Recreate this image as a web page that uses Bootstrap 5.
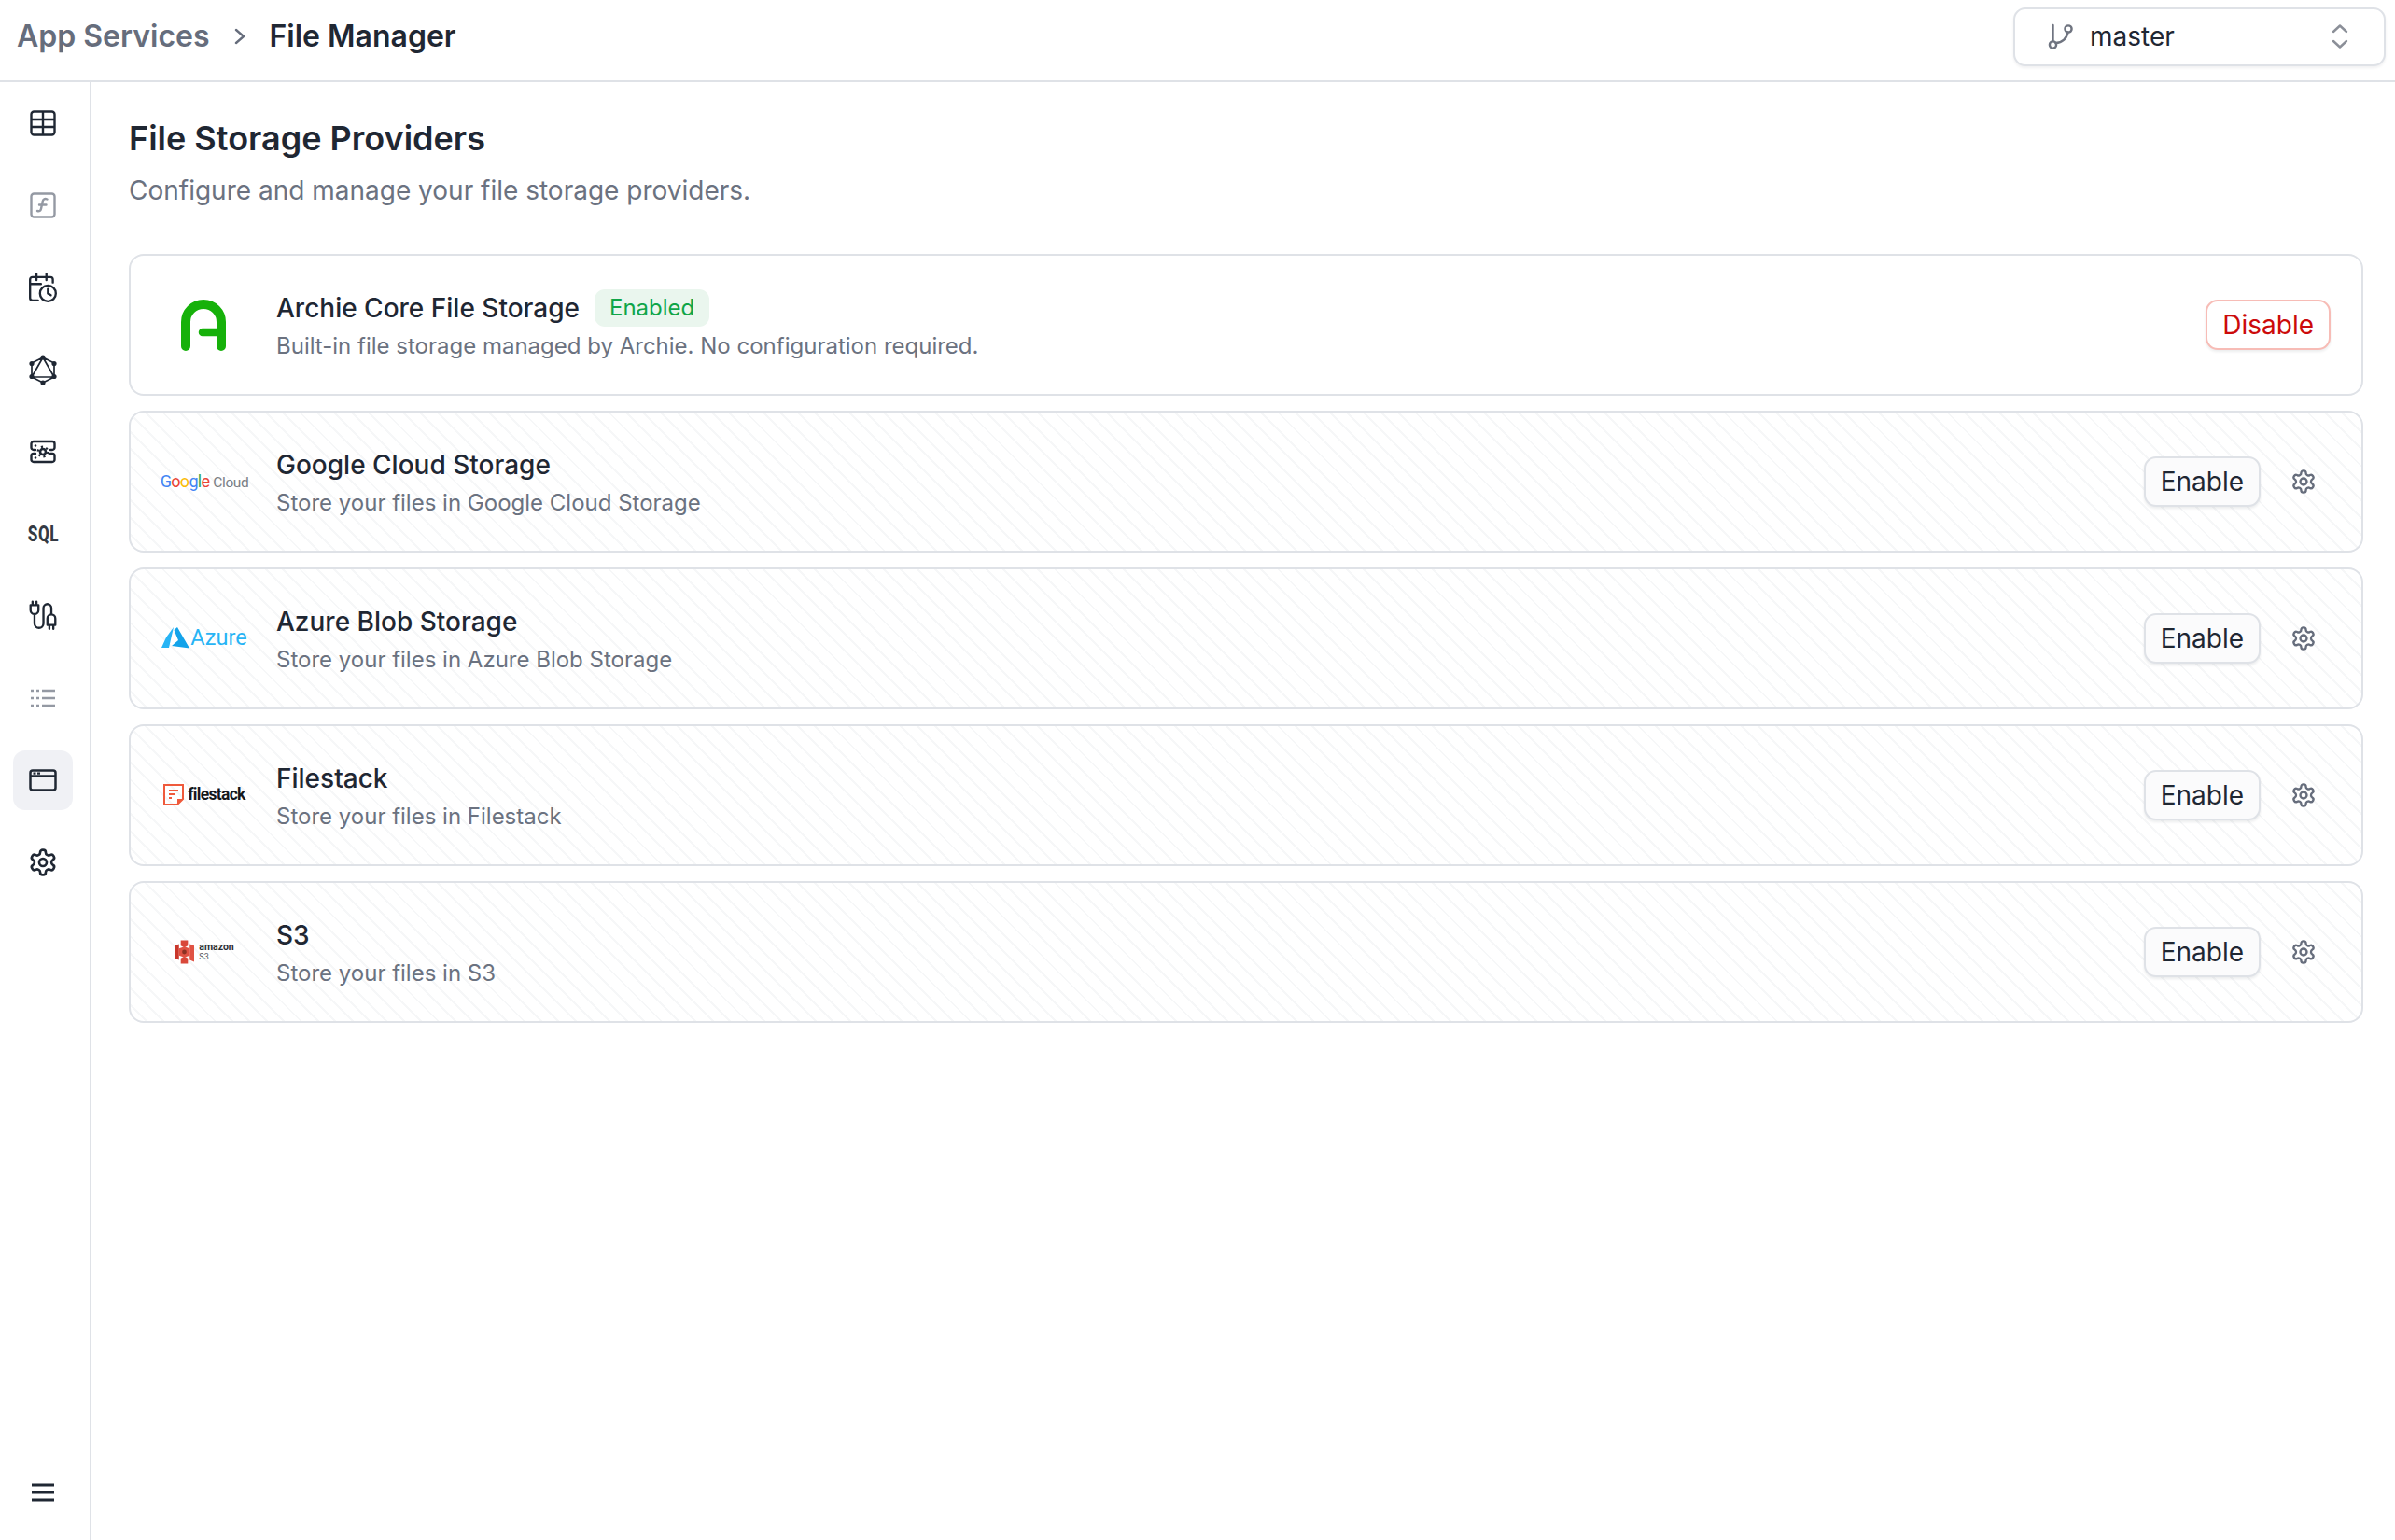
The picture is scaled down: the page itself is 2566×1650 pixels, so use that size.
<!DOCTYPE html>
<html lang="en">
<head>
<meta charset="utf-8">
<title>File Manager</title>
<link rel="stylesheet" href="https://cdn.jsdelivr.net/npm/bootstrap@5.3.0/dist/css/bootstrap.min.css">
<style>
html,body{height:100%;}
body{font-family:"Inter","Liberation Sans",sans-serif;color:#1f2733;background:#fff;font-size:28px;overflow:hidden;}
.topbar{height:88px;border-bottom:2px solid #dfe2e7;padding:0 10px 8px 18px;}
.crumb{font-size:32px;font-weight:600;line-height:1;}
.crumb-muted{color:#666d7c;}
.crumb-sep{margin:0 25px 0 25px;}
.branch{width:399px;height:63px;border:2px solid #dfe2e7;border-radius:13px;padding:0 36px 0 34px;box-shadow:0 2px 3px rgba(16,24,40,.06);background:#fff;color:#1f2733;font-size:28px;line-height:1;}
.branch .name{margin-left:16px;}
.shell{height:calc(100% - 88px);}
.side{width:98px;border-right:2px solid #dfe2e7;padding:12px 0 19px 14px;flex:none;}
.side-btn{width:64px;height:64px;border-radius:13px;color:#1f2733;text-decoration:none;}
.side-btn.dim{color:#9499a3;}
.side-btn.active{background:#f0f1f5;}
.side-btn svg{width:30px;height:30px;}
.side-btn svg.tall{width:32px;height:34px;}
.side-btn svg.gear-lg{width:32px;height:32px;}
.side-nav{gap:24px;}
.sql{font-family:"Roboto","Liberation Sans",sans-serif;font-weight:800;font-size:23px;line-height:1;transform:scaleX(.74);letter-spacing:.8px;color:#333a44;}
.main{padding:38px 34px 0 40px;}
h1.page{font-size:36px;font-weight:600;line-height:1.2;margin:0 0 18px;color:#1f2733;padding-top:1px;}
.lead-sub{font-size:28px;color:#6b7280;line-height:1.2;margin:0 0 50px;}
.prov-list{gap:16px;}
.prov{height:152px;border:2px solid #dfe2e7;border-radius:16px;padding:0 33px;background:#fff;}
.prov.off{padding-right:34px;background:repeating-linear-gradient(45deg,#fff 0,#fff 11px,#f6f7f8 11px,#f6f7f8 13px);}
.logo-box{width:92px;flex:none;margin-right:31px;}
.prov-text{padding-top:4px;}
.prov-title{font-size:28px;font-weight:500;line-height:42px;color:#1f2733;}
.prov-sub{font-size:24px;color:#6b7280;line-height:39px;}
.pill{font-size:24px;font-weight:400;line-height:1;color:#10a548;background:#eaf6ee;border-radius:11px;padding:8px 16px;margin-left:16px;}
.act{height:54px;border-radius:13px;border-width:2px;font-size:28px;line-height:1;padding:0 16px;box-shadow:0 2px 3px rgba(16,24,40,.08);}
.act-en{background:#fbfbfc;border-color:#dfe2e7;color:#1f2733;}
.act-dis{background:#fff;border-color:#f7bcb6;color:#cc0a0a;}
.gear{color:#666d7c;width:28px;height:28px;margin:0 14px 0 32px;flex:none;}
.gear svg{width:28px;height:28px;display:block;}
.gc{font-family:"Roboto","Liberation Sans",sans-serif;font-size:18px;letter-spacing:-.7px;white-space:nowrap;line-height:1;}
.gc .bl{color:#4285f4}.gc .re{color:#ea4335}.gc .ye{color:#fbbc05}.gc .gr{color:#34a853}.gc .cl{color:#7b8086;margin-left:4px;font-size:15.5px;letter-spacing:-.4px;}
.az{font-family:"Roboto","Liberation Sans",sans-serif;color:#27b4f5;font-size:23.5px;line-height:1;margin-left:1px;}
.fs{font-family:"Roboto","Liberation Sans",sans-serif;font-weight:700;color:#15181c;font-size:17.5px;letter-spacing:-.7px;line-height:1;margin-left:4px;}
.s3t{font-family:"Roboto","Liberation Sans",sans-serif;line-height:1;color:#2a2f36;margin-left:5px;}
.s3t b{display:block;font-size:10.5px;font-weight:700;}
.s3t span{display:block;font-size:9px;color:#555b64;}
.logo-archie{display:block;margin:2px 2px 0 0;}
</style>
</head>
<body>
<svg width="0" height="0" class="position-absolute"><defs><g id="gear" fill="none" stroke="currentColor" stroke-width="2" stroke-linecap="round" stroke-linejoin="round"><path d="M12.220 2h-.44a2 2 0 0 0-2 2v.18a2 2 0 0 1-1 1.730l-.43.25a2 2 0 0 1-2 0l-.15-.08a2 2 0 0 0-2.730.73l-.22.38a2 2 0 0 0 .73 2.730l.15.1a2 2 0 0 1 1 1.720v.51a2 2 0 0 1-1 1.740l-.15.09a2 2 0 0 0-.73 2.730l.22.38a2 2 0 0 0 2.730.73l.15-.08a2 2 0 0 1 2 0l.43.25a2 2 0 0 1 1 1.730V20a2 2 0 0 0 2 2h.44a2 2 0 0 0 2-2v-.18a2 2 0 0 1 1-1.730l.43-.25a2 2 0 0 1 2 0l.15.08a2 2 0 0 0 2.730-.73l.22-.39a2 2 0 0 0-.73-2.730l-.15-.08a2 2 0 0 1-1-1.740v-.5a2 2 0 0 1 1-1.740l.15-.09a2 2 0 0 0 .73-2.730l-.22-.38a2 2 0 0 0-2.730-.73l-.15.08a2 2 0 0 1-2 0l-.43-.25a2 2 0 0 1-1-1.730V4a2 2 0 0 0-2-2z"/><circle cx="12" cy="12" r="3"/></g></defs></svg>
<header class="topbar d-flex align-items-center justify-content-between">
  <div class="crumb d-flex align-items-center">
    <span class="crumb-muted">App Services</span>
    <svg class="crumb-sep" width="14" height="20" viewBox="0 0 14 20" fill="none" stroke="#666d7c" stroke-width="2.4" stroke-linecap="round" stroke-linejoin="round"><path d="M3 3l8 7-8 7"/></svg>
    <span>File Manager</span>
  </div>
  <button type="button" class="btn branch d-flex align-items-center">
    <svg width="30" height="30" viewBox="0 0 30 30" fill="none" stroke="#6f7480" stroke-width="2.4" stroke-linecap="round"><circle cx="6.500" cy="24" r="3.600"/><circle cx="23" cy="7" r="3.600"/><path d="M6.500 20V3M9.500 22c7 0 12-5 13-11.500"/></svg>
    <span class="name">master</span>
    <svg class="ms-auto" width="22" height="30" viewBox="0 0 22 30" fill="none" stroke="#8b8f98" stroke-width="2.4" stroke-linecap="round" stroke-linejoin="round"><path d="M4 10l7-6.500 7 6.500M4 20l7 6.500 7-6.500"/></svg>
  </button>
</header>
<div class="shell d-flex">
  <aside class="side d-flex flex-column justify-content-between">
    <nav class="side-nav d-flex flex-column">
      <a class="side-btn d-flex align-items-center justify-content-center"><svg viewBox="0 0 30 30" fill="none" stroke="currentColor" stroke-width="2.400"><rect x="2.500" y="2.500" width="25" height="25" rx="3"/><path d="M2.500 11h25M2.500 19h25M15 2.500v25"/></svg></a>
      <a class="side-btn dim d-flex align-items-center justify-content-center"><svg viewBox="0 0 30 30" fill="none" stroke="currentColor" stroke-width="2.400" stroke-linecap="round"><rect x="2.500" y="2.500" width="25" height="25" rx="3"/><path d="M19.500 8.500c-2.500-1-4.300-.3-4.800 2.200l-1.700 8c-.5 2.300-2 3-4 2.300M11 14.500h7.500"/></svg></a>
      <a class="side-btn d-flex align-items-center justify-content-center"><svg class="tall" viewBox="0 0 30 32" fill="none" stroke="currentColor" stroke-width="2.200" stroke-linecap="round" stroke-linejoin="round"><path d="M10 29H4.500A2.500 2.500 0 0 1 2 26.500V8A2.500 2.500 0 0 1 4.500 5.500h18A2.500 2.500 0 0 1 25 8v3M2 12.500h11M8.500 2v6.500M18.500 2v6.500"/><circle cx="20" cy="22" r="8"/><path d="M20 17.500V22l3 1.800"/></svg></a>
      <a class="side-btn d-flex align-items-center justify-content-center"><svg class="tall" viewBox="0 0 30 34" fill="none" stroke="currentColor" stroke-width="1.700" stroke-linejoin="round"><path d="M15 4L27 25H3zM15 4L3 10v15l12 6 12-6V10z"/><g fill="currentColor" stroke="none"><circle cx="15" cy="4" r="2.600"/><circle cx="27" cy="10.500" r="2.600"/><circle cx="3" cy="10.500" r="2.600"/><circle cx="27" cy="24.500" r="2.600"/><circle cx="3" cy="24.500" r="2.600"/><circle cx="15" cy="31" r="2.600"/></g></svg></a>
      <a class="side-btn d-flex align-items-center justify-content-center"><svg viewBox="0 0 30 30" fill="none" stroke="currentColor" stroke-width="2.400" stroke-linecap="round" stroke-linejoin="round"><path d="M7 13H5a2.500 2.500 0 0 1-2.500-2.500V6.500A2.500 2.500 0 0 1 5 4h20a2.500 2.500 0 0 1 2.500 2.500v4A2.500 2.500 0 0 1 25 13h-2M7 17H5a2.500 2.500 0 0 0-2.500 2.500v4A2.500 2.500 0 0 0 5 26h20a2.500 2.500 0 0 0 2.500-2.500v-4A2.500 2.500 0 0 0 25 17h-2"/><circle cx="15" cy="15" r="3" stroke-width="2.600"/><circle cx="15" cy="15" r="5.300" stroke-width="2.200" stroke-dasharray="2.200 3.350" stroke-linecap="butt"/><g fill="currentColor" stroke="none"><circle cx="7" cy="8.500" r="1.300"/><circle cx="7" cy="21.500" r="1.300"/></g></svg></a>
      <a class="side-btn d-flex align-items-center justify-content-center"><span class="sql">SQL</span></a>
      <a class="side-btn d-flex align-items-center justify-content-center"><svg class="tall" viewBox="0 0 30 32" fill="none" stroke="currentColor" stroke-width="2.200" stroke-linecap="round" stroke-linejoin="round"><path d="M2.500 5h8v5a4 4 0 0 1-8 0zM4.500 1.500V5M8.500 1.500V5M6.500 14v9.500a4.500 4.500 0 0 0 9 0V8a4 4 0 0 1 8 0v6"/><path d="M19.500 25v-6.500a4 4 0 0 1 8 0V25zM21.500 25v4M25.500 25v4"/></svg></a>
      <a class="side-btn dim d-flex align-items-center justify-content-center"><svg viewBox="0 0 30 30" fill="none" stroke="currentColor" stroke-width="2.400"><path d="M2 7h3M8 7h3M14 7h14M2 15h3M8 15h3M14 15h14M2 23h3M8 23h3M14 23h14"/></svg></a>
      <a class="side-btn active d-flex align-items-center justify-content-center"><svg viewBox="0 0 30 30" fill="none" stroke="currentColor" stroke-width="2.500"><rect x="1.500" y="4.500" width="27" height="21" rx="2.500"/><path d="M1.500 10.500h27"/><path d="M4.500 7.700h3M9 7.700h3" stroke-width="2.200"/></svg></a>
      <a class="side-btn d-flex align-items-center justify-content-center"><svg class="gear-lg" viewBox="0 0 24 24"><use href="#gear"/></svg></a>
    </nav>
    <a class="side-btn d-flex align-items-center justify-content-center"><svg viewBox="0 0 30 30" fill="none" stroke="currentColor" stroke-width="3"><path d="M3 7h24M3 15h24M3 23h24"/></svg></a>
  </aside>
  <main class="main flex-grow-1">
    <h1 class="page">File Storage Providers</h1>
    <p class="lead-sub">Configure and manage your file storage providers.</p>
    <div class="prov-list d-flex flex-column">
      <div class="prov d-flex align-items-center">
        <div class="logo-box d-flex justify-content-center"><svg class="logo-archie" width="48" height="55" viewBox="0 0 48 55" fill="none" stroke="#16b10a" stroke-width="10" stroke-linecap="round"><path d="M5 50V24a19 19 0 0 1 38 0v26"/><path d="M23 35h20" stroke-width="8.500"/></svg></div>
        <div class="prov-text flex-grow-1">
          <div class="prov-title d-flex align-items-center">Archie Core File Storage<span class="pill">Enabled</span></div>
          <div class="prov-sub">Built-in file storage managed by Archie. No configuration required.</div>
        </div>
        <button type="button" class="btn act act-dis">Disable</button>
      </div>
      <div class="prov off d-flex align-items-center">
        <div class="logo-box d-flex justify-content-center"><span class="gc"><span class="bl">G</span><span class="re">o</span><span class="ye">o</span><span class="bl">g</span><span class="gr">l</span><span class="re">e</span><span class="cl">Cloud</span></span></div>
        <div class="prov-text flex-grow-1">
          <div class="prov-title">Google Cloud Storage</div>
          <div class="prov-sub">Store your files in Google Cloud Storage</div>
        </div>
        <button type="button" class="btn act act-en">Enable</button>
        <span class="gear"><svg viewBox="0 0 24 24"><use href="#gear"/></svg></span>
      </div>
      <div class="prov off d-flex align-items-center">
        <div class="logo-box d-flex justify-content-center align-items-center"><svg width="30" height="23" viewBox="0 0 30 23"><path d="M13 0L5 11 0 22h8z" fill="#27b4f5"/><path d="M13.500 3L18 14 11 20l19 2.500L17 0z" fill="#13a3ea"/></svg><span class="az">Azure</span></div>
        <div class="prov-text flex-grow-1">
          <div class="prov-title">Azure Blob Storage</div>
          <div class="prov-sub">Store your files in Azure Blob Storage</div>
        </div>
        <button type="button" class="btn act act-en">Enable</button>
        <span class="gear"><svg viewBox="0 0 24 24"><use href="#gear"/></svg></span>
      </div>
      <div class="prov off d-flex align-items-center">
        <div class="logo-box d-flex justify-content-center align-items-center"><svg width="22" height="23" viewBox="0 0 22 23" fill="none" stroke="#ef5a3c" stroke-width="2"><path d="M1 1h20v15l-6 6H1z"/><path d="M6 7h10M6 11h7M6 15h3" stroke-width="1.800"/><path d="M15 16h6l-6 6z" fill="#ef5a3c" stroke="none"/></svg><span class="fs">filestack</span></div>
        <div class="prov-text flex-grow-1">
          <div class="prov-title">Filestack</div>
          <div class="prov-sub">Store your files in Filestack</div>
        </div>
        <button type="button" class="btn act act-en">Enable</button>
        <span class="gear"><svg viewBox="0 0 24 24"><use href="#gear"/></svg></span>
      </div>
      <div class="prov off d-flex align-items-center">
        <div class="logo-box d-flex justify-content-center align-items-center"><svg width="21" height="26" viewBox="0 0 22 26"><path d="M0 6l5-2v18l-5-2z" fill="#c9362b"/><path d="M22 6l-5-2v18l5 2z" fill="#e05243"/><path d="M7 0h8v6l-4 2-4-2zM7 20l4-2 4 2v6H7z" fill="#d9483a"/><path d="M5 9l6-2 6 2v8l-6 2-6-2z" fill="#e05243"/><circle cx="11" cy="13" r="2.500" fill="#8c3123"/></svg><span class="s3t"><b>amazon</b><span>S3</span></span></div>
        <div class="prov-text flex-grow-1">
          <div class="prov-title">S3</div>
          <div class="prov-sub">Store your files in S3</div>
        </div>
        <button type="button" class="btn act act-en">Enable</button>
        <span class="gear"><svg viewBox="0 0 24 24"><use href="#gear"/></svg></span>
      </div>
    </div>
  </main>
</div>
<script src="https://cdn.jsdelivr.net/npm/bootstrap@5.3.0/dist/js/bootstrap.bundle.min.js"></script>
</body>
</html>
